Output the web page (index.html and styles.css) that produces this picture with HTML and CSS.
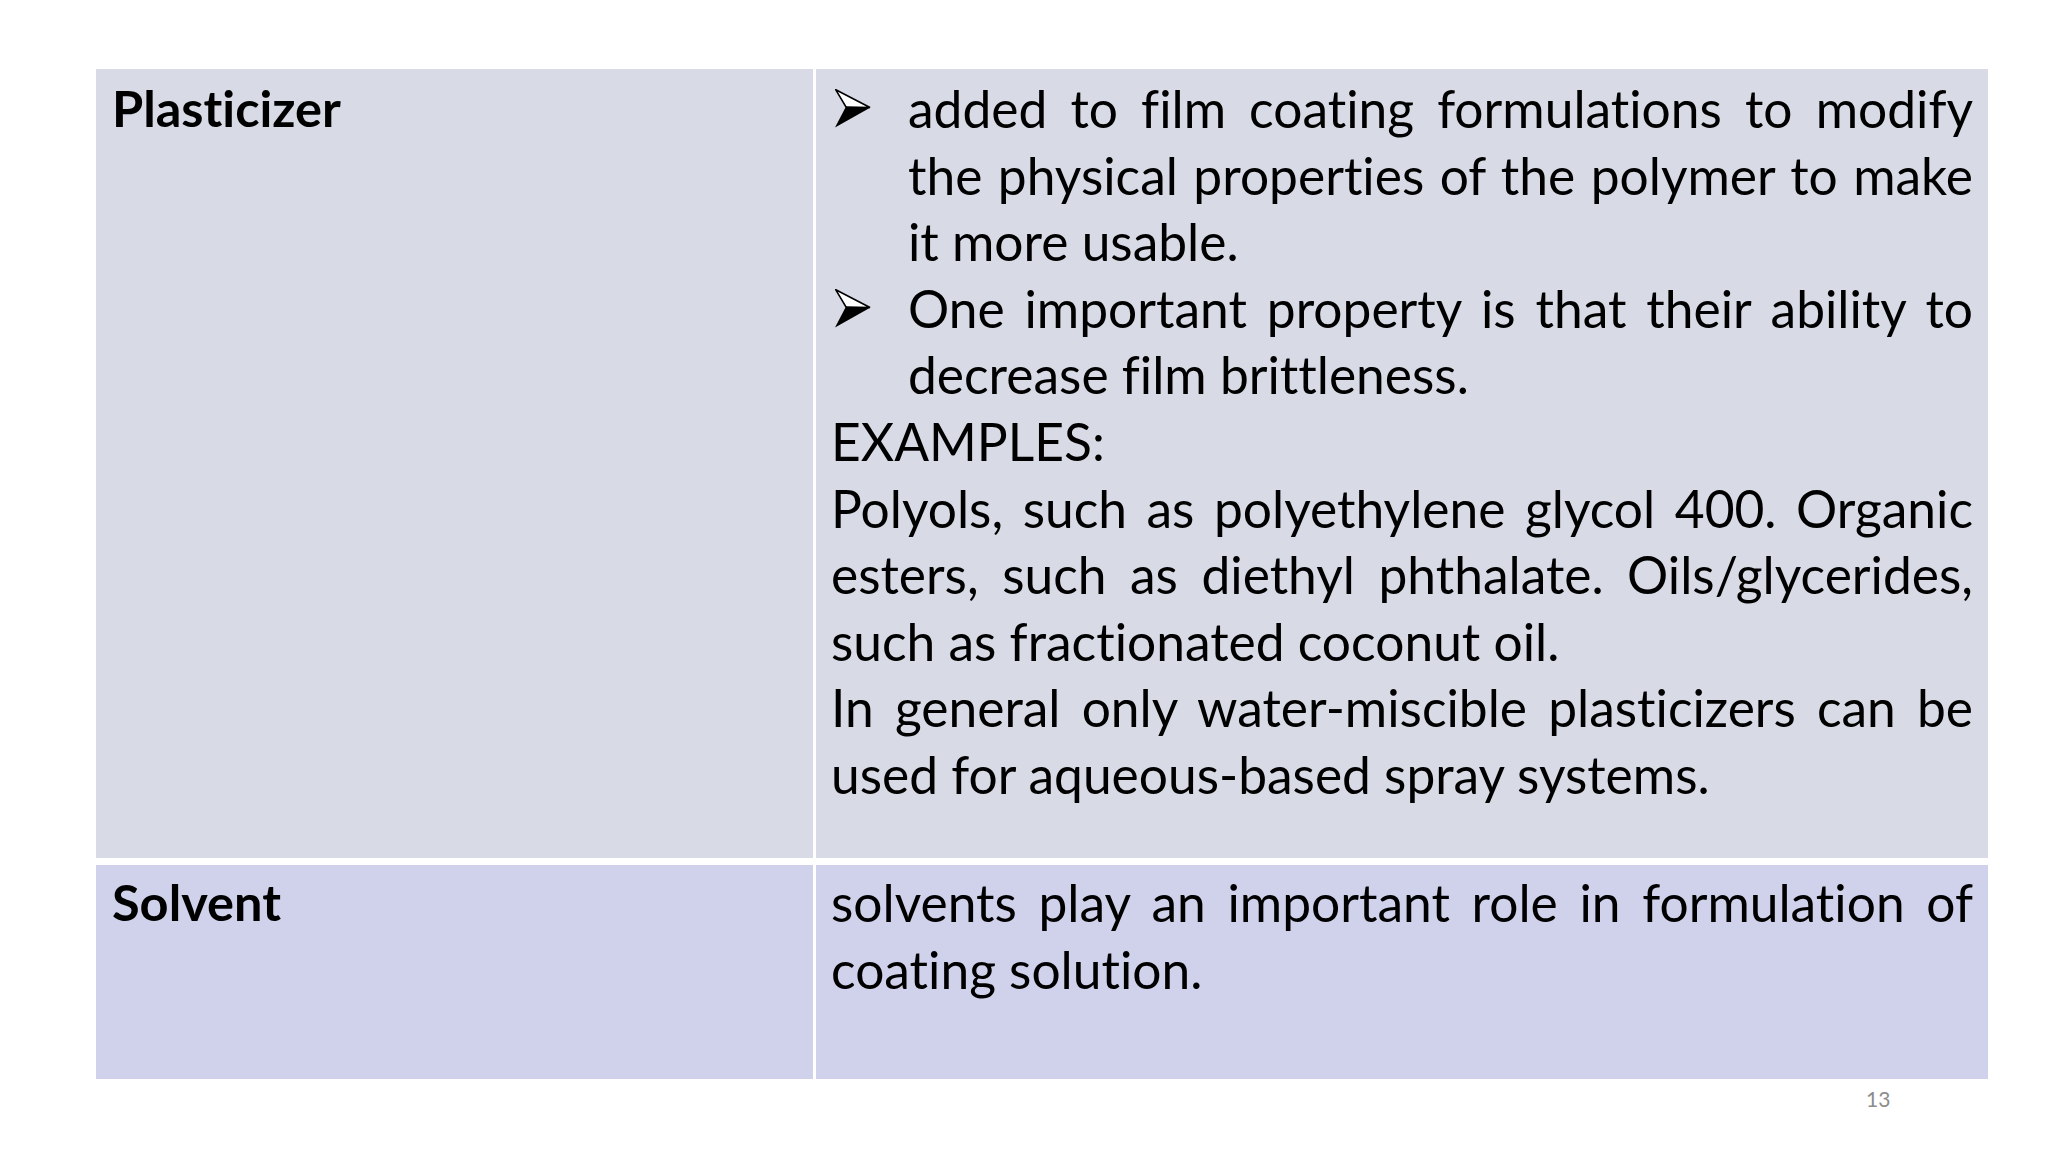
FILE: index.html
```html
<!DOCTYPE html>
<html>
<head>
<meta charset="utf-8">
<link rel="stylesheet" href="styles.css">
</head>
<body>
<div class="slide">
  <div class="table">
    <div class="cell row1 head">Plasticizer</div>
    <div class="cell row1 body">
      <div class="bullet">
        <svg class="arrow" viewBox="0 0 36 39" width="36" height="39"><polygon points="0.8,0.8 35,18.5 11,18 " fill="#fff" stroke="#000" stroke-width="1.6" stroke-linejoin="miter"/><polygon points="11,17.6 35.5,18.6 0,38.5" fill="#000"/></svg>
        <div class="btext">
          <span class="jl">added to film coating formulations to modify</span>
          <span class="jl">the physical properties of the polymer to make</span>
          <span class="ll">it more usable.</span>
        </div>
      </div>
      <div class="bullet">
        <svg class="arrow" viewBox="0 0 36 39" width="36" height="39"><polygon points="0.8,0.8 35,18.5 11,18 " fill="#fff" stroke="#000" stroke-width="1.6" stroke-linejoin="miter"/><polygon points="11,17.6 35.5,18.6 0,38.5" fill="#000"/></svg>
        <div class="btext">
          <span class="jl">One important property is that their ability to</span>
          <span class="ll">decrease film brittleness.</span>
        </div>
      </div>
      <p class="para"><span class="ll">EXAMPLES:</span></p>
      <p class="para">
        <span class="jl">Polyols, such as polyethylene glycol 400. Organic</span>
        <span class="jl">esters, such as diethyl phthalate. Oils/glycerides,</span>
        <span class="ll">such as fractionated coconut oil.</span>
      </p>
      <p class="para">
        <span class="jl">In general only water-miscible plasticizers can be</span>
        <span class="ll">used for aqueous-based spray systems.</span>
      </p>
    </div>
    <div class="cell row2 head">Solvent</div>
    <div class="cell row2 body">
      <p class="para">
        <span class="jl">solvents play an important role in formulation of</span>
        <span class="ll">coating solution.</span>
      </p>
    </div>
  </div>
  <div class="pagenum">13</div>
</div>
</body>
</html>
```
FILE: styles.css
```css
html, body {
  margin: 0;
  padding: 0;
  background: #ffffff;
}
.slide {
  width: 2048px;
  height: 1152px;
  box-sizing: border-box;
  padding: 69px 0 0 96px;
  font-family: Lato, "Open Sans", sans-serif;
  font-variant-ligatures: none;
  color: #000;
}
.table {
  display: grid;
  grid-template-columns: 717px 1172px;
  grid-template-rows: 789px 214px;
  column-gap: 3px;
  row-gap: 7px;
  width: 1892px;
}
.cell {
  box-sizing: border-box;
  font-size: 51.5px;
  line-height: 66.6px;
  padding-top: 6px;
}
.row1 { background: #d8dbe6; }
.row2 { background: #d0d2ec; padding-top: 4px; }
.head {
  font-weight: bold;
  font-size: 50.5px;
  padding-left: 16px;
}
.body {
  padding-left: 15px;
  padding-right: 15px;
}
.bullet {
  display: flex;
  align-items: flex-start;
}
.arrow {
  flex: none;
  width: 36px;
  height: 39px;
  margin: 14px 37px 0 4px;
}
.btext {
  flex: 1;
  min-width: 0;
}
.para {
  margin: 0;
}
.jl {
  display: block;
  text-align: justify;
  text-align-last: justify;
  white-space: nowrap;
}
.ll {
  display: block;
  text-align: left;
  white-space: nowrap;
}
.pagenum {
  margin: 7px 0 0 1770px;
  font-size: 21px;
  line-height: 25px;
  color: #8c8c8c;
}
```
